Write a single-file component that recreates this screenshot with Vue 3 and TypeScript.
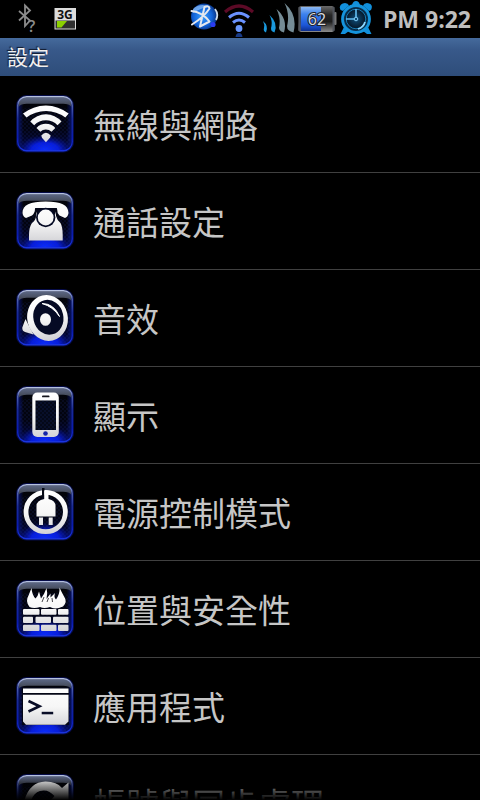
<script setup lang="ts">
interface SettingItem {
  id: string
  label: string
}

const settings: SettingItem[] = [
  { id: 'wireless', label: '無線與網路' },
  { id: 'call', label: '通話設定' },
  { id: 'sound', label: '音效' },
  { id: 'display', label: '顯示' },
  { id: 'power', label: '電源控制模式' },
  { id: 'security', label: '位置與安全性' },
  { id: 'apps', label: '應用程式' },
  { id: 'sync', label: '帳號與同步處理' },
]
</script>

<template>
  <div class="screen">
    <svg class="defs" aria-hidden="true">
      <defs>
        <linearGradient id="tileEdge" x1="0" y1="0" x2="0" y2="1">
          <stop offset="0" stop-color="#b4c0e0" />
          <stop offset="0.14" stop-color="#5264b0" />
          <stop offset="0.4" stop-color="#1a2c94" />
          <stop offset="0.75" stop-color="#0a1cae" />
          <stop offset="1" stop-color="#1a34e0" />
        </linearGradient>
        <linearGradient id="tileBody" x1="0" y1="0" x2="0" y2="1">
          <stop offset="0" stop-color="#030408" />
          <stop offset="0.6" stop-color="#020310" />
          <stop offset="1" stop-color="#020848" />
        </linearGradient>
        <linearGradient id="tileGloss" x1="0" y1="0" x2="0" y2="1">
          <stop offset="0" stop-color="#5c6784" />
          <stop offset="1" stop-color="#3c404a" />
        </linearGradient>
        <linearGradient id="tileSide" x1="0" y1="0" x2="1" y2="0">
          <stop offset="0" stop-color="#0a1a90" stop-opacity="0.7" />
          <stop offset="0.1" stop-color="#0a1a90" stop-opacity="0" />
          <stop offset="0.9" stop-color="#0a1a90" stop-opacity="0" />
          <stop offset="1" stop-color="#0a1a90" stop-opacity="0.7" />
        </linearGradient>
        <radialGradient id="tileGlow" gradientUnits="userSpaceOnUse" cx="0" cy="0" r="1" gradientTransform="translate(30 56) scale(27 15)">
          <stop offset="0" stop-color="#0a2cff" />
          <stop offset="0.5" stop-color="#061ef0" stop-opacity="0.9" />
          <stop offset="1" stop-color="#0410a0" stop-opacity="0" />
        </radialGradient>
        <linearGradient id="silver" gradientUnits="userSpaceOnUse" x1="0" y1="10" x2="0" y2="52">
          <stop offset="0" stop-color="#ffffff" />
          <stop offset="0.5" stop-color="#f6f6f6" />
          <stop offset="1" stop-color="#d2d2d6" />
        </linearGradient>
        <pattern id="mesh" width="4" height="4" patternUnits="userSpaceOnUse">
          <path d="M0 0L2 2L4 0M0 4L2 2L4 4" fill="none" stroke="#24389c" stroke-width="0.5" opacity="0.28" />
        </pattern>
        <radialGradient id="btBall" cx="0.45" cy="0.5" r="0.6">
          <stop offset="0" stop-color="#3aa0ff" />
          <stop offset="0.6" stop-color="#1263d8" />
          <stop offset="1" stop-color="#06266e" />
        </radialGradient>
        <linearGradient id="cellFill" x1="0" y1="0" x2="0" y2="1">
          <stop offset="0" stop-color="#8db8f0" />
          <stop offset="0.3" stop-color="#3c82ee" />
          <stop offset="0.75" stop-color="#1c56d8" />
          <stop offset="1" stop-color="#0d2f90" />
        </linearGradient>
        <linearGradient id="cellEmpty" x1="0" y1="0" x2="0" y2="1">
          <stop offset="0" stop-color="#6a6a6a" />
          <stop offset="0.35" stop-color="#262626" />
          <stop offset="0.6" stop-color="#1c1c1c" />
          <stop offset="1" stop-color="#8c8c8c" />
        </linearGradient>
        <radialGradient id="dial" cx="0.5" cy="0.5" r="0.5">
          <stop offset="0" stop-color="#0e4f7c" />
          <stop offset="0.7" stop-color="#05182a" />
          <stop offset="1" stop-color="#0a4a78" />
        </radialGradient>

        <symbol id="tile" viewBox="0 0 60 60">
          <rect x="1" y="1" width="58" height="57.5" rx="11" fill="#0a1478" opacity="0.6" />
          <rect x="2.5" y="2.5" width="55" height="54.5" rx="9" fill="url(#tileBody)" />
          <rect x="3" y="3" width="54" height="53" rx="9" fill="url(#tileSide)" />
          <path d="M3.5 13C3.5 6 6.500 3.500 12 3.500H48C53.500 3.500 56.500 6 56.500 13C55 10.500 52 9.700 48 9.700H12C8 9.700 5 10.500 3.500 13Z" fill="url(#tileGloss)" />
          <rect x="5" y="36" width="50" height="20" rx="7" fill="url(#tileGlow)" />
          <rect x="5" y="14" width="50" height="42" rx="7" fill="url(#mesh)" />
          <rect x="2.7" y="2.7" width="54.600" height="54" rx="9" fill="none" stroke="url(#tileEdge)" stroke-width="1.400" />
        </symbol>

        <symbol id="icon-wireless" viewBox="0 0 60 60">
          <g fill="url(#silver)">
            <path d="M8 19.500A37 37 0 0 1 53.700 19.500L50.300 23.500A32 32 0 0 0 11.500 23.500Z" />
            <path d="M15.300 27.500A20.500 20.500 0 0 1 46.500 27.500L42.500 31.300A16 16 0 0 0 19.200 31.300Z" />
            <path d="M21.500 34A12.500 12.500 0 0 1 40.300 34L36.500 37.700A8 8 0 0 0 25.300 37.700Z" />
            <path d="M26.300 41.500Q31 36 35.700 41.500L35 43.800L30.900 48.300L27 43.800Z" />
          </g>
        </symbol>

        <symbol id="icon-call" viewBox="0 0 60 60">
          <path d="M7.500 22C7.500 14 15 10.500 30.700 10.500C46 10.500 53.500 14 53.500 22Q53 26 50 27L44.500 24.500Q42 22 42 17.500H20Q20 22 17 24.500L11 27Q8 26 7.500 22Z" fill="url(#silver)" />
          <path d="M21 19H41V25Q42 29 45.500 32Q47.700 36 47.700 44V49.500H14V44Q14 36 17 32Q21 29 21 25Z" fill="url(#silver)" />
          <path d="M20 17H42L40 24Q35 18 30.700 18Q26 18 22 24Z" fill="#050718" />
          <circle cx="30.700" cy="26.500" r="9.700" fill="#050a24" />
          <circle cx="30.700" cy="26.500" r="7.900" fill="url(#silver)" />
        </symbol>

        <symbol id="icon-sound" viewBox="0 0 60 60">
          <path d="M10.500 31L7.300 39.500Q7 43 10 44L18.500 46.500L14 38Z" fill="url(#silver)" />
          <g transform="rotate(-13 32.500 30)">
            <ellipse cx="32.500" cy="30" rx="20.300" ry="23" fill="url(#silver)" />
            <ellipse cx="33.500" cy="29.500" rx="15" ry="17.500" fill="#050a24" />
          </g>
          <ellipse cx="30.500" cy="31.500" rx="5.500" ry="6.300" fill="url(#silver)" />
          <path d="M27 15.500Q39 15.500 44.500 28.500Q38 18.500 27 15.500Z" fill="#fff" stroke="#fff" stroke-width="1" />
        </symbol>

        <symbol id="icon-display" viewBox="0 0 60 60">
          <rect x="17.300" y="7.500" width="26.500" height="44.500" rx="5" fill="url(#silver)" />
          <rect x="20.500" y="15.500" width="20.500" height="29.500" fill="#040818" />
          <rect x="20.500" y="15.500" width="20.500" height="29.500" fill="url(#mesh)" />
          <rect x="27" y="10.500" width="7.500" height="1.800" rx="0.900" fill="#15151c" />
          <circle cx="30.500" cy="48.500" r="2.300" fill="#1525a8" />
        </symbol>

        <symbol id="icon-power" viewBox="0 0 60 60">
          <circle cx="30.700" cy="30" r="19.700" fill="none" stroke="url(#silver)" stroke-width="4.800" />
          <rect x="27" y="6" width="2.500" height="9" fill="#060914" />
          <path d="M29.200 8.500H33.500V17Q40.500 18.500 40.500 24V34.500H21.500V24Q21.500 18.500 29.200 17Z" fill="url(#silver)" />
          <path d="M24 35.500H28V43H24ZM33.700 35.500H37.700V43H33.700Z" fill="url(#silver)" />
        </symbol>

        <symbol id="icon-security" viewBox="0 0 60 60">
          <path d="M14.500 28Q10 22 13.500 16.500L16.500 9Q17 16 20.500 19.500Q23 17 24 12.500L26 19.500Q29.500 15 31.500 9Q33 14 31.500 20L35.500 14.500L35.500 18.500L40 14Q38.500 18 41 20.500Q45 15 44.500 8.500Q47 14 48.500 16.500Q53 23 48 27.500Q40 31 35 28Q29 30 25 28Q19 30 14.500 28Z" fill="url(#silver)" />
          <path d="M27 23L29 18M37.500 23L37 19M32 23L33.500 19" stroke="#18181d" stroke-width="0.800" />
          <g fill="url(#silver)">
            <rect x="8" y="30" width="16.500" height="5.800" rx="1" />
            <rect x="26" y="30" width="15.500" height="5.800" rx="1" />
            <rect x="43" y="30" width="10.500" height="5.800" rx="1" />
            <rect x="8" y="37.700" width="10" height="6.300" rx="1" />
            <rect x="20.500" y="37.700" width="15.500" height="6.300" rx="1" />
            <rect x="38" y="37.700" width="15.500" height="6.300" rx="1" />
            <rect x="8" y="45.700" width="16.500" height="6.300" rx="1" />
            <rect x="26" y="45.700" width="15.500" height="6.300" rx="1" />
            <rect x="43" y="45.700" width="10.500" height="6.300" rx="1" />
          </g>
        </symbol>

        <symbol id="icon-apps" viewBox="0 0 60 60">
          <rect x="7" y="11" width="47" height="38" fill="#050716" />
          <path d="M8 12.500H53.500V17H8Z" fill="url(#silver)" />
          <path d="M8 18.700H53.500V45.500L50 48.700H11L8 45.500Z" fill="url(#silver)" />
          <path d="M13.500 25L24.500 30.200L13.500 35.500" fill="none" stroke="#080c26" stroke-width="2.600" />
          <rect x="26.700" y="35.800" width="11.500" height="2.500" fill="#080c26" />
        </symbol>

        <symbol id="icon-sync" viewBox="0 0 60 60">
          <path d="M8 34Q12 9 30.500 8.500Q42 8.500 47 15L53.500 9.500V30H33.500L39.500 23Q33 15.500 25 18Q16 21 15 34Z" fill="url(#silver)" />
        </symbol>
      </defs>
    </svg>

    <header class="status">
      <div class="notices">
        <svg width="22" height="38" viewBox="0 0 22 38" role="img" aria-label="Bluetooth">
          <path d="M3 11L14 20.500L9 26V5.500L14 10.500L3 20.500" fill="none" stroke="#8c8c8c" stroke-width="1.800" />
          <text x="12" y="32" font-size="16" font-weight="600" fill="#8c8c8c">?</text>
        </svg>
        <svg width="22" height="38" viewBox="0 0 22 38" role="img" aria-label="3G">
          <rect x="0.500" y="8" width="21.500" height="21.500" fill="#dcdcdc" />
          <rect x="1.500" y="20.500" width="19.500" height="8" fill="#303030" />
          <path d="M3 21H13L7.500 27.500H3Z" fill="#8bd000" />
          <text x="11" y="18.500" text-anchor="middle" font-size="12" font-weight="bold" fill="#111">3G</text>
        </svg>
      </div>

      <div class="indicators">
        <svg width="32" height="38" viewBox="0 0 32 38" aria-hidden="true">
          <circle cx="16" cy="16.500" r="13" fill="url(#btBall)" />
          <path d="M5 9Q12 2 23 7Q14 7 5 13Z" fill="#a8d4ff" opacity="0.6" />
          <path d="M3.500 11Q14 12 21.500 21.500L12 26.500L16.500 7Q21 5 21.500 8.500Q16 17 4 24.500" fill="none" stroke="#e4e8ee" stroke-width="2" stroke-linecap="round" stroke-linejoin="round" />
          <path d="M27 9Q31 14 28 20" fill="none" stroke="#cfdcec" stroke-width="1.800" />
          <circle cx="25" cy="24.500" r="2.600" fill="#2a3cf0" />
        </svg>

        <svg width="34" height="38" viewBox="0 0 34 38" aria-hidden="true">
          <path d="M3 12Q17 0 31 12" fill="none" stroke="#5c0a26" stroke-width="3.200" />
          <path d="M7 17.500Q17 9 27 17.500" fill="none" stroke="#6a92ff" stroke-width="3" />
          <path d="M11 22.500Q17 17.500 23 22.500" fill="none" stroke="#6a92ff" stroke-width="3" />
          <circle cx="17" cy="28.500" r="3.400" fill="#6a98ff" />
          <path d="M13.500 37Q14 33 17 33T20.500 37Z" fill="#173a88" />
        </svg>

        <svg width="38" height="38" viewBox="0 0 38 38" aria-hidden="true">
          <path d="M5 21Q11 26 8 32.500Q5 31 6 28Q7 25 5 21Z" fill="#1a98dc" />
          <path d="M11.500 15Q20.500 23 16.500 32.500Q11.500 31 13.500 26Q14.500 21 11.500 15Z" fill="#1a98dc" />
          <path d="M18.500 9Q30 19 26 32.500Q19.500 31 21.500 25Q22.500 17 18.500 9Z" fill="#758c96" />
          <path d="M26.500 3Q40 15 35.500 32.500Q27.500 31 29.500 24Q31.500 13 26.500 3Z" fill="#758c96" />
        </svg>

        <svg width="39" height="38" viewBox="0 0 39 38" role="img" aria-label="62%">
          <rect x="0.500" y="6" width="36" height="26" rx="3" fill="url(#cellEmpty)" />
          <rect x="36" y="12" width="2.500" height="13" rx="1" fill="#777" />
          <rect x="2.500" y="7" width="20.500" height="24" fill="url(#cellFill)" />
          <path d="M1.500 7V31M35.500 7V31" stroke="#50545c" stroke-width="2" />
          <text x="19" y="25" text-anchor="middle" font-size="16" fill="#dcdcdc" stroke="#202028" stroke-width="2" paint-order="stroke">62</text>
        </svg>

        <svg width="34" height="38" viewBox="0 0 34 38" aria-hidden="true">
          <g fill="#1290dc">
            <path d="M1.500 10Q-1 4 6 3Q9 3 10 5.500L4 11Z" />
            <path d="M32 10Q35 4 28 3Q25 3 24 5.500L30 11Z" />
            <path d="M13 5Q14 1 17 1T21 5Z" />
            <path d="M5 27L1.500 34H6L10 31ZM29 27L32.500 34H28L24 31Z" />
          </g>
          <circle cx="17" cy="19" r="13.500" fill="url(#dial)" stroke="#1594dc" stroke-width="2.800" />
          <circle cx="17" cy="19" r="9.800" fill="none" stroke="#187db8" stroke-width="1" />
          <path d="M17 9V19H7" fill="none" stroke="#62bdf2" stroke-width="1.600" />
          <path d="M26 22A10 10 0 0 1 19 29" fill="none" stroke="#8bd8ff" stroke-width="1.800" />
          <circle cx="17" cy="19" r="1.800" fill="#0d4a72" stroke="#82cdf8" />
        </svg>

        <time class="clock">PM 9:22</time>
      </div>
    </header>

    <h1 class="title">設定</h1>

    <main class="content">
      <ul class="list">
        <li v-for="item in settings" :key="item.id" class="entry">
          <button type="button" class="row">
            <svg class="icon" viewBox="0 0 60 60" aria-hidden="true">
              <use href="#tile" />
              <use :href="`#icon-${item.id}`" />
            </svg>
            <span class="label">{{ item.label }}</span>
          </button>
        </li>
      </ul>
    </main>
  </div>
</template>

<style>
body {
  background: #000;
}
</style>

<style scoped>
.screen {
  display: flex;
  flex-direction: column;
  height: 100vh;
  overflow: hidden;
  background: #000;
  font-family: "Open Sans", "Noto Sans CJK TC", sans-serif;
}

.defs {
  position: absolute;
  width: 0;
  height: 0;
}

.status {
  display: flex;
  justify-content: space-between;
  flex: none;
  padding: 0 9px 0 16px;
}

.notices,
.indicators {
  display: flex;
  align-items: center;
}

.notices {
  gap: 16px;
}

.indicators {
  gap: 2px;
}

.clock {
  margin-left: 8px;
  font-size: 23px;
  font-weight: 700;
  line-height: 38px;
  color: #bebebe;
  white-space: nowrap;
}

.title {
  flex: none;
  margin: 0;
  padding: 0 7px;
  background: linear-gradient(#456a9c, #38598a 30%, #2e4d7a);
  color: #f0f0f0;
  font-size: 21px;
  font-weight: 400;
  line-height: 38px;
  text-shadow: -1px -1px 1px #10182a;
}

.content {
  position: relative;
  flex: 1;
  min-height: 0;
  overflow: hidden;
}

/* Fading edge over the clipped end of the list */
.content::after {
  content: "";
  position: absolute;
  inset: auto 0 0;
  height: 24px;
  background: linear-gradient(rgba(0, 0, 0, 0), #000);
  pointer-events: none;
}

.list {
  margin: 0;
  padding: 0;
  list-style: none;
}

.entry {
  border-bottom: 1px solid #404040;
}

.row {
  display: flex;
  align-items: center;
  gap: 18px;
  width: 100%;
  padding: 18px 15px;
  border: 0;
  background: none;
  color: #c6c6c6;
  font: inherit;
  text-align: left;
}

.icon {
  flex: none;
  width: 60px;
  height: 60px;
}

.label {
  padding-top: 4px;
  font-size: 33px;
  line-height: 48px;
  white-space: nowrap;
}
</style>
